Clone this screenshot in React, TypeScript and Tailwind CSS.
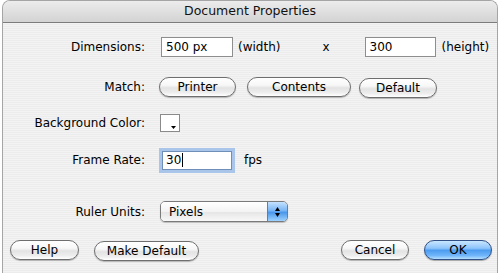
import React from 'react';

const font = { fontFamily: '"DejaVu Sans", "Liberation Sans", sans-serif' };

const AquaButton = ({
  label,
  width,
  primary,
}: {
  label: string;
  width: string;
  primary?: boolean;
}) => (
  <button
    type="button"
    className={
      primary
        ? `${width} h-[20px] rounded-full border border-[#2f4f86] bg-[linear-gradient(#c9e6ff,#8ec5fb_40%,#4d9cef_52%,#6fb5fa_80%,#b5e0ff)] text-[12px] leading-none text-black shadow-[0_1px_1px_rgba(0,0,0,0.3)]`
        : `${width} h-[20px] rounded-full border border-[#6e6e6e] bg-[linear-gradient(#ffffff,#f7f7f7_40%,#e3e3e3_55%,#ededed_80%,#ffffff)] text-[12px] leading-none text-black shadow-[0_1px_1px_rgba(0,0,0,0.25)]`
    }
  >
    {label}
  </button>
);

const Label = ({ text }: { text: string }) => (
  <div className="w-[142px] shrink-0 text-right text-[12px] text-black">{text}</div>
);

export default function App() {
  return (
    <div className="w-[500px] h-[273px] bg-white overflow-hidden" style={font}>
      <div className="mx-[2px] h-[273px] rounded-t-[8px] border-x border-t border-[#a5a5a5] overflow-hidden flex flex-col bg-[repeating-linear-gradient(0deg,#ececec_0px,#ececec_1px,#f3f3f3_1px,#f3f3f3_2px)]">
        {/* title bar */}
        <div className="h-[22px] shrink-0 flex items-center justify-center border-b border-[#7c7c7c] bg-[linear-gradient(#ececec,#d3d3d3)] text-[12.5px] text-[#111]">
          Document Properties
        </div>

        {/* dimensions */}
        <div className="mt-[14px] flex items-center h-[20px]">
          <Label text="Dimensions:" />
          <div className="ml-[16px] w-[72px] h-[20px] border border-[#8e8e8e] bg-white px-[4px] flex items-center text-[12px]">
            500 px
          </div>
          <span className="ml-[5px] text-[12px]">(width)</span>
          <span className="ml-[42px] text-[12px]">x</span>
          <div className="ml-[35px] w-[71px] h-[20px] border border-[#8e8e8e] bg-white px-[4px] flex items-center text-[12px]">
            300
          </div>
          <span className="ml-[6px] text-[12px]">(height)</span>
        </div>

        {/* match */}
        <div className="mt-[20px] flex items-center h-[20px]">
          <Label text="Match:" />
          <div className="ml-[14px] flex gap-[11px]">
            <AquaButton label="Printer" width="w-[77px]" />
            <AquaButton label="Contents" width="w-[104px]" />
          </div>
          <div className="ml-[8px]">
            <AquaButton label="Default" width="w-[78px]" />
          </div>
        </div>

        {/* background color */}
        <div className="mt-[17px] flex items-center h-[18px]">
          <Label text="Background Color:" />
          <div className="ml-[15px] relative w-[20px] h-[18px] border border-[#8a8a8a] bg-white">
            <svg className="absolute right-[3px] bottom-[2px]" width="5" height="3" viewBox="0 0 5 3">
              <path d="M0 0h5L2.5 3z" fill="#000" />
            </svg>
          </div>
        </div>

        {/* frame rate */}
        <div className="mt-[18px] flex items-center h-[20px]">
          <Label text="Frame Rate:" />
          <div className="ml-[17px] w-[70px] h-[19px] border border-[#6f8fb8] bg-white px-[3px] flex items-center text-[12px] shadow-[0_0_0_3px_#a9c6ea]">
            30<span className="ml-[1px] inline-block w-[1px] h-[14px] bg-black" />
          </div>
          <span className="ml-[12px] text-[12px]">fps</span>
        </div>

        {/* ruler units */}
        <div className="mt-[31px] flex items-center h-[21px]">
          <Label text="Ruler Units:" />
          <div className="ml-[15px] w-[128px] h-[21px] rounded-[5px] border border-[#7a7a7a] flex overflow-hidden shadow-[0_1px_1px_rgba(0,0,0,0.2)]">
            <div className="flex-1 flex items-center pl-[8px] text-[12px] bg-[linear-gradient(#ffffff,#f3f3f3_50%,#e6e6e6_55%,#f8f8f8)]">
              Pixels
            </div>
            <div className="w-[20px] border-l border-[#5b7fb5] flex flex-col items-center justify-center gap-[2px] bg-[linear-gradient(#c5e2ff,#7ab6f5_45%,#4b97ea_55%,#9dd2ff)]">
              <svg width="5" height="4" viewBox="0 0 5 4">
                <path d="M2.5 0L5 4H0z" fill="#000" />
              </svg>
              <svg width="5" height="4" viewBox="0 0 5 4">
                <path d="M0 0h5L2.5 4z" fill="#000" />
              </svg>
            </div>
          </div>
        </div>

        {/* bottom buttons */}
        <div className="mt-[18px] flex items-center h-[20px] pl-[7px]">
          <AquaButton label="Help" width="w-[69px]" />
          <div className="ml-[15px]">
            <AquaButton label="Make Default" width="w-[105px]" />
          </div>
          <div className="ml-auto flex gap-[15px] mr-[5px]">
            <AquaButton label="Cancel" width="w-[68px]" />
            <AquaButton label="OK" width="w-[68px]" primary />
          </div>
        </div>
      </div>
    </div>
  );
}
